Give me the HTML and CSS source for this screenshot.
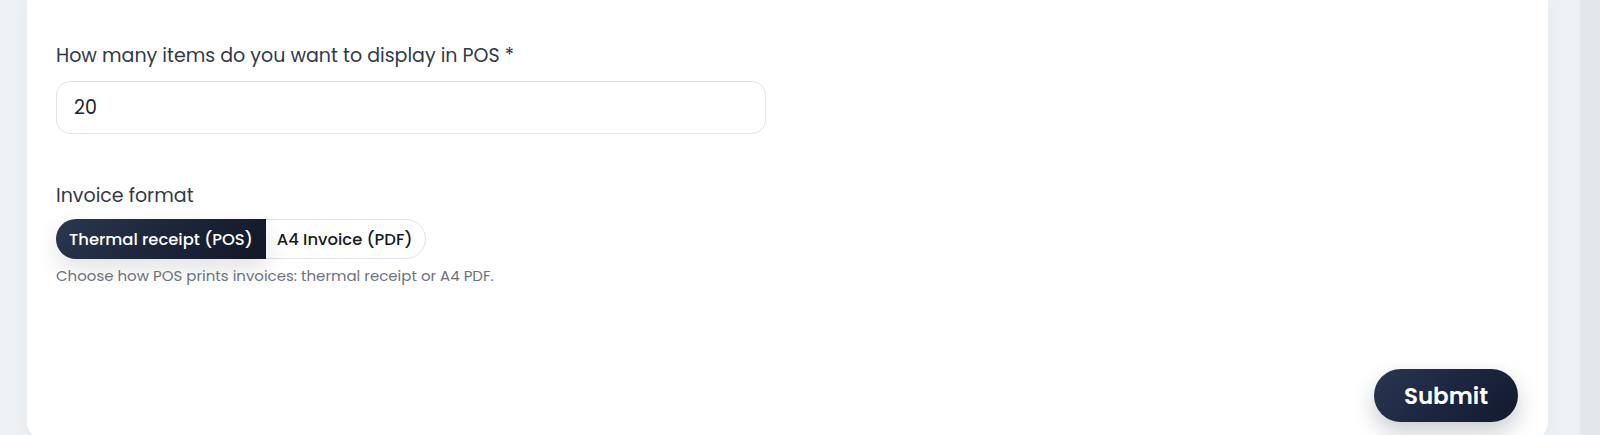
FILE: index.html
```html
<!DOCTYPE html>
<html lang="en">
<head>
  <meta charset="UTF-8">
  <meta name="viewport" content="width=device-width, initial-scale=1.0">
  <title>POS Settings</title>
  <link rel="stylesheet" href="styles.css">
</head>
<body>
  <div class="page">
    <main class="content">
      <form class="card" onsubmit="return false;">
        <div class="field">
          <label class="field-label" for="posItems">How many items do you want to display in POS *</label>
          <input class="text-input" id="posItems" type="text" value="20">
        </div>

        <div class="field field-invoice">
          <div class="field-label">Invoice format</div>
          <div class="segmented">
            <button type="button" class="segment active">Thermal receipt (POS)</button>
            <button type="button" class="segment">A4 Invoice (PDF)</button>
          </div>
          <p class="hint">Choose how POS prints invoices: thermal receipt or A4 PDF.</p>
        </div>

        <div class="actions">
          <button type="submit" class="btn-submit">Submit</button>
        </div>
      </form>
    </main>
    <div class="rail"></div>
  </div>
</body>
</html>
```

FILE: styles.css
```css
* {
  box-sizing: border-box;
}
html, body {
  height: 100%;
}
body {
  margin: 0;
  font-family: 'Poppins', 'Open Sans', sans-serif;
  color: #2f3a4c;
  background-color: #eef1f4;
  overflow: hidden;
}
.page {
  display: flex;
  height: 100%;
}
.content {
  flex: 1;
  padding: 0 32px 0 27px;
}
.rail {
  width: 20px;
  background-color: #e3e6ea;
}
.card {
  background: #fff;
  border-radius: 0 0 18px 18px;
  padding: 42px 30px 18px 29px;
  min-height: 440px;
  box-shadow: 0 4px 16px rgba(15, 23, 42, 0.04);
}
.field-label {
  display: block;
  font-size: 19px;
  line-height: 27px;
  color: #2f3a4c;
  margin-bottom: 12px;
}
.text-input {
  display: block;
  width: 710px;
  height: 53px;
  padding: 0 17px;
  border: 1px solid #dfe2e7;
  border-radius: 14px;
  font-family: inherit;
  font-size: 19px;
  color: #1f2430;
  background: #fff;
  outline: none;
}
.field-invoice {
  margin-top: 48px;
}
.field-invoice .field-label {
  margin-bottom: 10px;
}
.segmented {
  display: inline-flex;
  height: 40px;
  border: 1px solid #dfe2e7;
  border-radius: 999px;
  background: #fff;
}
.segment {
  border: none;
  background: transparent;
  font-family: inherit;
  font-size: 16.4px;
  font-weight: 500;
  color: #151a24;
  padding: 0 13px 0 11px;
  border-radius: 0 999px 999px 0;
  cursor: pointer;
}
.segment.active {
  margin: -1px 0 -1px -1px;
  padding: 0 13px;
  color: #fff;
  border-radius: 999px 0 0 999px;
  background: linear-gradient(135deg, #2b3850 0%, #1b2438 55%, #111827 100%);
  box-shadow: 0 10px 22px rgba(15, 23, 42, 0.12);
}
.hint {
  margin: 6px 0 0;
  font-size: 15px;
  line-height: 22px;
  color: #6b7280;
}
.actions {
  display: flex;
  justify-content: flex-end;
  margin-top: 82px;
}
.btn-submit {
  width: 144px;
  height: 53px;
  border: none;
  border-radius: 999px;
  font-family: inherit;
  font-size: 23px;
  font-weight: 600;
  color: #fff;
  background: linear-gradient(135deg, #2a3650 0%, #1c2640 50%, #121a2e 100%);
  box-shadow: 0 10px 22px rgba(15, 23, 42, 0.22);
  cursor: pointer;
}
```
